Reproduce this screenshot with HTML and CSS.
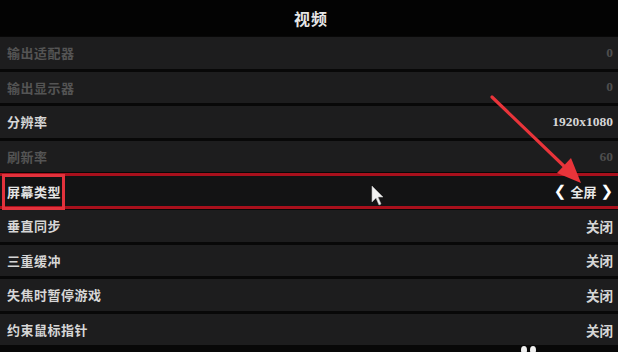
FILE: index.html
```html
<!DOCTYPE html>
<html lang="zh">
<head>
<meta charset="utf-8">
<link rel="stylesheet" href="styles.css">
</head>
<body>
<div class="screen">
  <header class="title">视频</header>
  <div class="list">
    <div class="row dim"><span class="label">输出适配器</span><span class="val">0</span></div>
    <div class="row dim"><span class="label">输出显示器</span><span class="val">0</span></div>
    <div class="row"><span class="label">分辨率</span><span class="val">1920x1080</span></div>
    <div class="row dim"><span class="label">刷新率</span><span class="val">60</span></div>
    <div class="row sel"><span class="label boxed">屏幕类型</span><span class="val chooser"><span class="chev">&#10094;</span><span>全屏</span><span class="chev">&#10095;</span></span></div>
    <div class="row"><span class="label">垂直同步</span><span class="val">关闭</span></div>
    <div class="row"><span class="label">三重缓冲</span><span class="val">关闭</span></div>
    <div class="row"><span class="label">失焦时暂停游戏</span><span class="val">关闭</span></div>
    <div class="row"><span class="label">约束鼠标指针</span><span class="val">关闭</span></div>
  </div>
  <svg class="arrow" width="618" height="352" viewBox="0 0 618 352">
    <line x1="492" y1="97" x2="567" y2="169" stroke="#e8343a" stroke-width="3.2" stroke-linecap="round"/>
    <polygon points="581,183 557,173 571,158" fill="#e8343a"/>
  </svg>
  <svg class="cursor" width="14" height="22" viewBox="0 0 14 22">
    <path d="M1 1 L1 17 L5 13 L8 20 L10 19 L7 12 L12 12 Z" fill="#f2f2f2" stroke="#bbb" stroke-width="0.6"/>
  </svg>
  <div class="dots"><span></span><span></span></div>
</div>
</body>
</html>
```
FILE: styles.css
```css
html, body {
  margin: 0;
  padding: 0;
  background: #070707;
}
.screen {
  position: relative;
  width: 618px;
  height: 352px;
  overflow: hidden;
  background: #080808;
  font-family: "Noto Sans CJK SC", "Liberation Serif", serif;
}
.title {
  height: 36px;
  display: flex;
  align-items: center;
  justify-content: center;
  background: #030303;
  color: #e6e6e6;
  font-size: 16px;
  font-weight: 700;
  letter-spacing: 1px;
  padding-left: 4px;
  box-sizing: border-box;
}
.list {
  display: flex;
  flex-direction: column;
  gap: 3px;
  padding-top: 1px;
}
.row {
  height: 31.6px;
  display: flex;
  align-items: center;
  justify-content: space-between;
  padding: 0 5px 0 7px;
  background: #1d1d1e;
  color: #d6d6d6;
  font-size: 13px;
  font-weight: 700;
  letter-spacing: 0.5px;
}
.row.dim {
  color: #545454;
}
.row.dim .val {
  color: #4e4e4e;
}
.val {
  font-family: "Liberation Serif", "Noto Sans CJK SC", serif;
  font-size: 13.5px;
  letter-spacing: 0;
}
.row.sel {
  position: relative;
  background: #131314;
  border-top: 3px solid #a8101c;
  border-bottom: 3px solid #a8101c;
  margin: -2px 0;
  height: 29.6px;
  color: #e4e4e4;
}
.boxed {
  position: relative;
}
.boxed::after {
  content: "";
  position: absolute;
  left: -5px;
  right: -4px;
  top: -8px;
  bottom: -9px;
  border: 3px solid #e2323c;
}
.chooser {
  display: flex;
  align-items: center;
  gap: 4px;
  font-family: "Noto Sans CJK SC", serif;
  font-size: 13px;
  color: #e8e8e8;
}
.chev {
  font-family: "DejaVu Sans", sans-serif;
  font-size: 15px;
  font-weight: 700;
  color: #ffffff;
}
.arrow {
  position: absolute;
  left: 0;
  top: 0;
  pointer-events: none;
}
.cursor {
  position: absolute;
  left: 371px;
  top: 185px;
}
.dots {
  position: absolute;
  left: 521px;
  top: 346px;
  display: flex;
  gap: 3px;
}
.dots span {
  width: 6px;
  height: 8px;
  border-radius: 50%;
  background: #f0f0f0;
}
```
